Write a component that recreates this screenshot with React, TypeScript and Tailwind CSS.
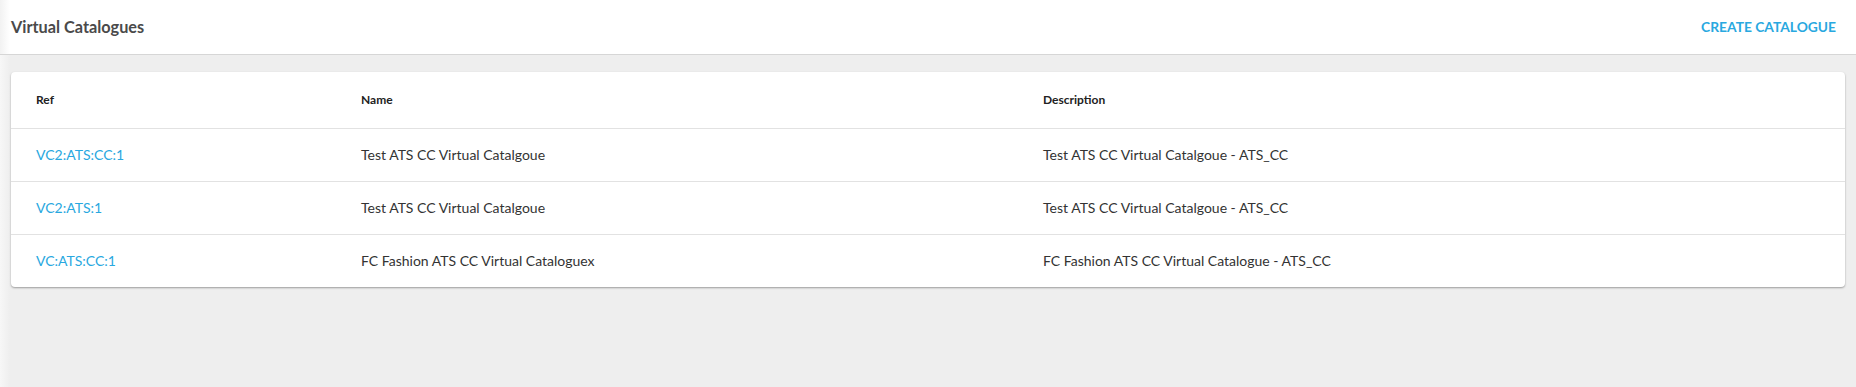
const rows = [
  {
    ref: "VC2:ATS:CC:1",
    name: "Test ATS CC Virtual Catalgoue",
    description: "Test ATS CC Virtual Catalgoue - ATS_CC",
  },
  {
    ref: "VC2:ATS:1",
    name: "Test ATS CC Virtual Catalgoue",
    description: "Test ATS CC Virtual Catalgoue - ATS_CC",
  },
  {
    ref: "VC:ATS:CC:1",
    name: "FC Fashion ATS CC Virtual Cataloguex",
    description: "FC Fashion ATS CC Virtual Catalogue - ATS_CC",
  },
];

export default function App() {
  return (
    <div className="flex h-[387px] w-full flex-col bg-[#eeeeee] bg-[linear-gradient(to_right,#f7f7f7_0px,#eeeeee_10px)] font-['Lato','Liberation_Sans',sans-serif]">
      {/* Page header */}
      <div className="flex h-[55px] shrink-0 items-center justify-between border-b border-[#d6d6d6] bg-white bg-[linear-gradient(to_right,#f2f2f2_0px,#ffffff_10px)] pl-[11px] pr-[20px]">
        <h1 className="text-[16.3px] font-bold text-[#4a4a4a]">Virtual Catalogues</h1>
        <button className="text-[13.8px] font-bold uppercase text-[#29a8e0]">Create Catalogue</button>
      </div>

      <div className="px-[11px] pt-[17px]">
        <div className="overflow-hidden rounded-[4px] bg-white shadow-[0_1px_2px_rgba(0,0,0,0.35)]">
          <table className="w-full table-fixed border-collapse text-left">
            <thead>
              <tr className="h-[56px] border-b border-[#e2e2e2]">
                <th className="w-[326px] pl-[25px] text-[12px] font-bold text-[#222222]">Ref</th>
                <th className="w-[682px] pl-[24px] text-[12px] font-bold text-[#222222]">Name</th>
                <th className="pl-[24px] text-[12px] font-bold text-[#222222]">Description</th>
              </tr>
            </thead>
            <tbody>
              {rows.map((row, i) => (
                <tr
                  key={row.ref}
                  className={`h-[53px] ${i < rows.length - 1 ? "border-b border-[#e2e2e2]" : ""}`}
                >
                  <td className="pl-[25px] text-[14px] text-[#29a8e0]">{row.ref}</td>
                  <td className="pl-[24px] text-[14px] text-[#333333]">{row.name}</td>
                  <td className="pl-[24px] text-[14px] text-[#333333]">{row.description}</td>
                </tr>
              ))}
            </tbody>
          </table>
        </div>
      </div>
    </div>
  );
}
